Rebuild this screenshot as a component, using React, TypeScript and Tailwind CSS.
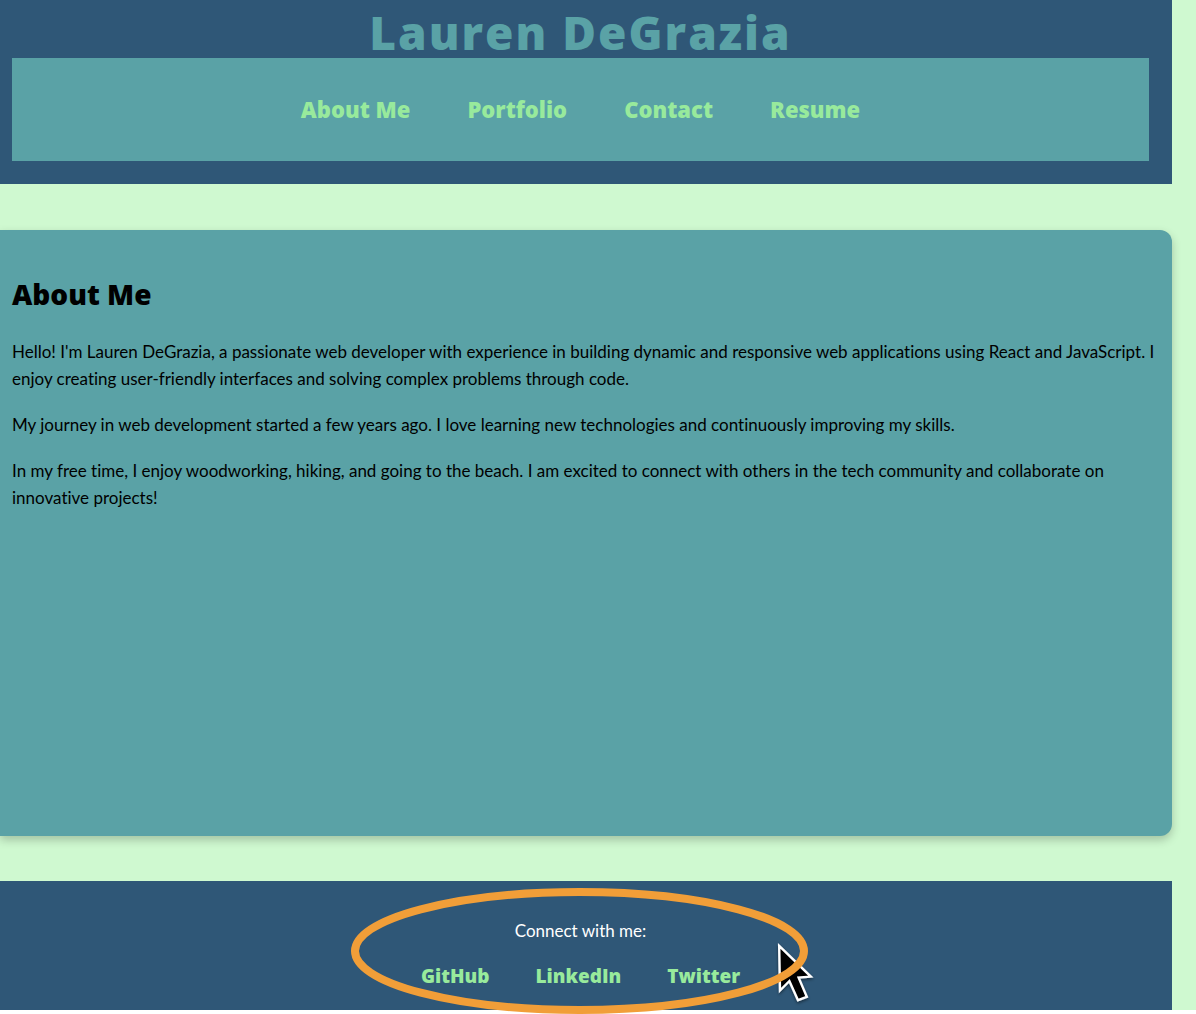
const navLinks = ["About Me", "Portfolio", "Contact", "Resume"];
const socialLinks = ["GitHub", "LinkedIn", "Twitter"];

function Highlight() {
  return (
    <svg
      aria-hidden="true"
      className="pointer-events-none absolute -top-[29px] left-1/2 h-[126px] w-[480px] -translate-x-1/2"
      viewBox="341 888 480 126"
      fill="none"
    >
      <defs>
        <filter id="pointer-shadow" x="-30%" y="-30%" width="160%" height="160%">
          <feDropShadow dx="0" dy="1.5" stdDeviation="1.5" floodOpacity="0.5" />
        </filter>
      </defs>
      <path
        d="M779.2 946L780 990.5L789.4 981L798 1000.2L806.8 996.8L798.6 977.6L810.8 976.6Z"
        fill="#000"
        stroke="#fff"
        strokeWidth="2.4"
        filter="url(#pointer-shadow)"
      />
      <ellipse cx="579.5" cy="951" rx="224.5" ry="59" stroke="#f19e38" strokeWidth="8" />
    </svg>
  );
}

export default function App() {
  return (
    <div className="min-h-screen bg-white">
      <div className="bg-[#cff9d0] pr-6 font-['Lato',sans-serif] text-black [font-variant-ligatures:no-common-ligatures]">
        <header className="bg-[#2f5777] pt-1.5 pr-[23px] pb-[23px] pl-3">
          <h1 className="text-center font-['Open_Sans',sans-serif] text-[46px] leading-[52px] font-extrabold tracking-[2px] text-[#5aa2a6]">
            Lauren DeGrazia
          </h1>
          <nav className="bg-[#5aa2a6] py-[38px]">
            <ul className="flex justify-center gap-[57px] font-['Open_Sans',sans-serif] text-[22px] leading-[27px] font-extrabold text-[#98ea9c]">
              {navLinks.map((label) => (
                <li key={label}>
                  <a href="#">{label}</a>
                </li>
              ))}
            </ul>
          </nav>
        </header>

        <main className="mt-[46px] mb-[45px] min-h-[606px] rounded-r-xl bg-[#5aa2a6] pt-11 pr-3 pl-3 shadow-[0_4px_10px_rgba(0,0,0,0.22)]">
          <h2 className="font-['Open_Sans',sans-serif] text-[28px] leading-10 font-extrabold">About Me</h2>
          <div className="mt-6 flex flex-col gap-[19px] text-[17px] leading-[27px]">
            <p>
              Hello! I'm Lauren DeGrazia, a passionate web developer with experience in building dynamic and responsive
              web applications using React and JavaScript. I enjoy creating user-friendly interfaces and solving complex
              problems through code.
            </p>
            <p>
              My journey in web development started a few years ago. I love learning new technologies and continuously
              improving my skills.
            </p>
            <p>
              In my free time, I enjoy woodworking, hiking, and going to the beach. I am excited to connect with others
              in the tech community and collaborate on innovative projects!
            </p>
          </div>
        </main>

        <footer className="bg-[#2f5777] pt-9 pr-[23px] pb-5 pl-3">
          <div className="relative text-center text-[17px] leading-[27px]">
            <p className="text-white">Connect with me:</p>
            <ul className="mt-[19px] flex justify-center gap-[46px] font-['Open_Sans',sans-serif] text-[19px] leading-[27px] font-extrabold text-[#98ea9c]">
              {socialLinks.map((label) => (
                <li key={label}>
                  <a href="#">{label}</a>
                </li>
              ))}
            </ul>
            <Highlight />
          </div>
        </footer>
      </div>
    </div>
  );
}
